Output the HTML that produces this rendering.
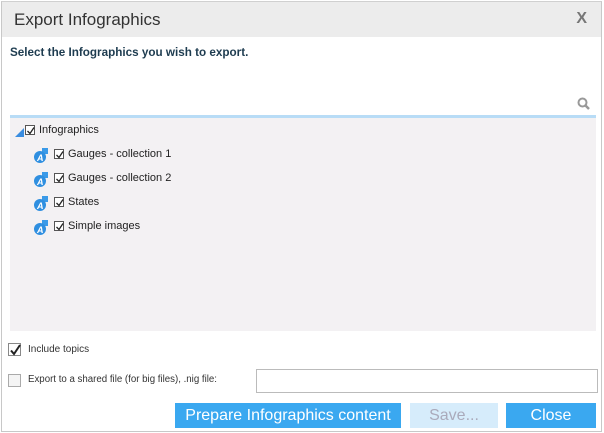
<!DOCTYPE html>
<html><head><meta charset="utf-8"><style>
*{margin:0;padding:0;box-sizing:border-box}
body{width:604px;height:433px;background:#fff;font-family:"Liberation Sans",Arial,sans-serif;position:relative;overflow:hidden}
.frame{position:absolute;left:1px;top:1px;width:601px;height:431px;border:1px solid #c8c8c8;border-top-color:#d0d0d0;background:#fff}
.title{position:absolute;left:2px;top:2px;width:599px;height:35px;background:#ececec}
.title span{position:absolute;left:12px;top:8px;font-size:17px;color:#333}
.x{position:absolute;right:14px;top:8px;font-size:16px;font-weight:bold;color:#777}
.sub{position:absolute;left:10px;top:46px;font-size:11.7px;font-weight:bold;color:#1e3c50;white-space:nowrap}
.panel{position:absolute;left:10px;top:115px;width:586px;height:216px;background:#f3f1f3;border-top:3px solid #b8dcf6}
.t{position:absolute;font-size:11px;color:#222;white-space:nowrap}
.cb{position:absolute;width:10px;height:10px;border:1px solid #555;background:#fff}
.cb svg{position:absolute;left:0;top:0}
.ic{position:absolute;width:16px;height:16px}
.btn{position:absolute;top:403px;height:25px;background:#3aa8f0;color:#fff;font-size:16px;text-align:center;line-height:25px;white-space:nowrap}
</style></head><body>
<div class="frame"></div>
<div class="title"><span>Export Infographics</span><div class="x">X</div></div>
<div class="sub">Select the Infographics you wish to export.</div>
<svg style="position:absolute;left:577px;top:97px" width="14" height="14"><circle cx="5.5" cy="5.5" r="4" fill="none" stroke="#999" stroke-width="2"/><line x1="8.5" y1="8.5" x2="12" y2="12" stroke="#999" stroke-width="2.5"/></svg>
<div class="panel"></div>
<svg style="position:absolute;left:15px;top:128px" width="9" height="9"><polygon points="9,0 9,9 0,9" fill="#3a8de0"/></svg>
<div class="cb" style="left:25px;top:125px"><svg width="10" height="10"><path d="M1.5 5 L4 7.5 L8 1.5" fill="none" stroke="#222" stroke-width="1.3"/></svg></div>
<div class="t" style="left:39px;top:124px">Infographics</div>
 <svg class="ic" style="left:33px;top:147px" viewBox="0 0 16 16"><rect x="9" y="1" width="6" height="6" fill="#3a9ae8"/><circle cx="7" cy="10" r="6" fill="#2f8fe0"/><text x="4" y="14" font-size="9" font-weight="bold" fill="#fff" font-family="Liberation Sans" font-style="italic">A</text></svg>
 <div class="cb" style="left:54px;top:149px"><svg width="10" height="10"><path d="M1.5 5 L4 7.5 L8 1.5" fill="none" stroke="#222" stroke-width="1.3"/></svg></div>
 <div class="t" style="left:68px;top:148px">Gauges - collection 1</div>
 <svg class="ic" style="left:33px;top:171px" viewBox="0 0 16 16"><rect x="9" y="1" width="6" height="6" fill="#3a9ae8"/><circle cx="7" cy="10" r="6" fill="#2f8fe0"/><text x="4" y="14" font-size="9" font-weight="bold" fill="#fff" font-family="Liberation Sans" font-style="italic">A</text></svg>
 <div class="cb" style="left:54px;top:173px"><svg width="10" height="10"><path d="M1.5 5 L4 7.5 L8 1.5" fill="none" stroke="#222" stroke-width="1.3"/></svg></div>
 <div class="t" style="left:68px;top:172px">Gauges - collection 2</div>
 <svg class="ic" style="left:33px;top:195px" viewBox="0 0 16 16"><rect x="9" y="1" width="6" height="6" fill="#3a9ae8"/><circle cx="7" cy="10" r="6" fill="#2f8fe0"/><text x="4" y="14" font-size="9" font-weight="bold" fill="#fff" font-family="Liberation Sans" font-style="italic">A</text></svg>
 <div class="cb" style="left:54px;top:197px"><svg width="10" height="10"><path d="M1.5 5 L4 7.5 L8 1.5" fill="none" stroke="#222" stroke-width="1.3"/></svg></div>
 <div class="t" style="left:68px;top:196px">States</div>
 <svg class="ic" style="left:33px;top:219px" viewBox="0 0 16 16"><rect x="9" y="1" width="6" height="6" fill="#3a9ae8"/><circle cx="7" cy="10" r="6" fill="#2f8fe0"/><text x="4" y="14" font-size="9" font-weight="bold" fill="#fff" font-family="Liberation Sans" font-style="italic">A</text></svg>
 <div class="cb" style="left:54px;top:221px"><svg width="10" height="10"><path d="M1.5 5 L4 7.5 L8 1.5" fill="none" stroke="#222" stroke-width="1.3"/></svg></div>
 <div class="t" style="left:68px;top:220px">Simple images</div>
<div class="cb" style="left:8px;top:343px;width:13px;height:13px;border-color:#888"><svg width="13" height="13"><path d="M2 6.5 L5 10 L11 1" fill="none" stroke="#222" stroke-width="2"/></svg></div>
<div class="t" style="left:28px;top:344px;font-size:10px;color:#333">Include topics</div>
<div class="cb" style="left:8px;top:374px;width:13px;height:13px;border-color:#aaa;background:#f4f4f4"></div>
<div class="t" style="left:28px;top:374px;font-size:9.7px;color:#333">Export to a shared file (for big files), .nig file:</div>
<div style="position:absolute;left:256px;top:369px;width:342px;height:24px;border:1px solid #bbb;background:#fff"></div>
<div class="btn" style="left:175px;width:226px">Prepare Infographics content</div>
<div class="btn" style="left:410px;width:88px;background:#d6ecfb;color:#aab">Save...</div>
<div class="btn" style="left:506px;width:90px">Close</div>
</body></html>
